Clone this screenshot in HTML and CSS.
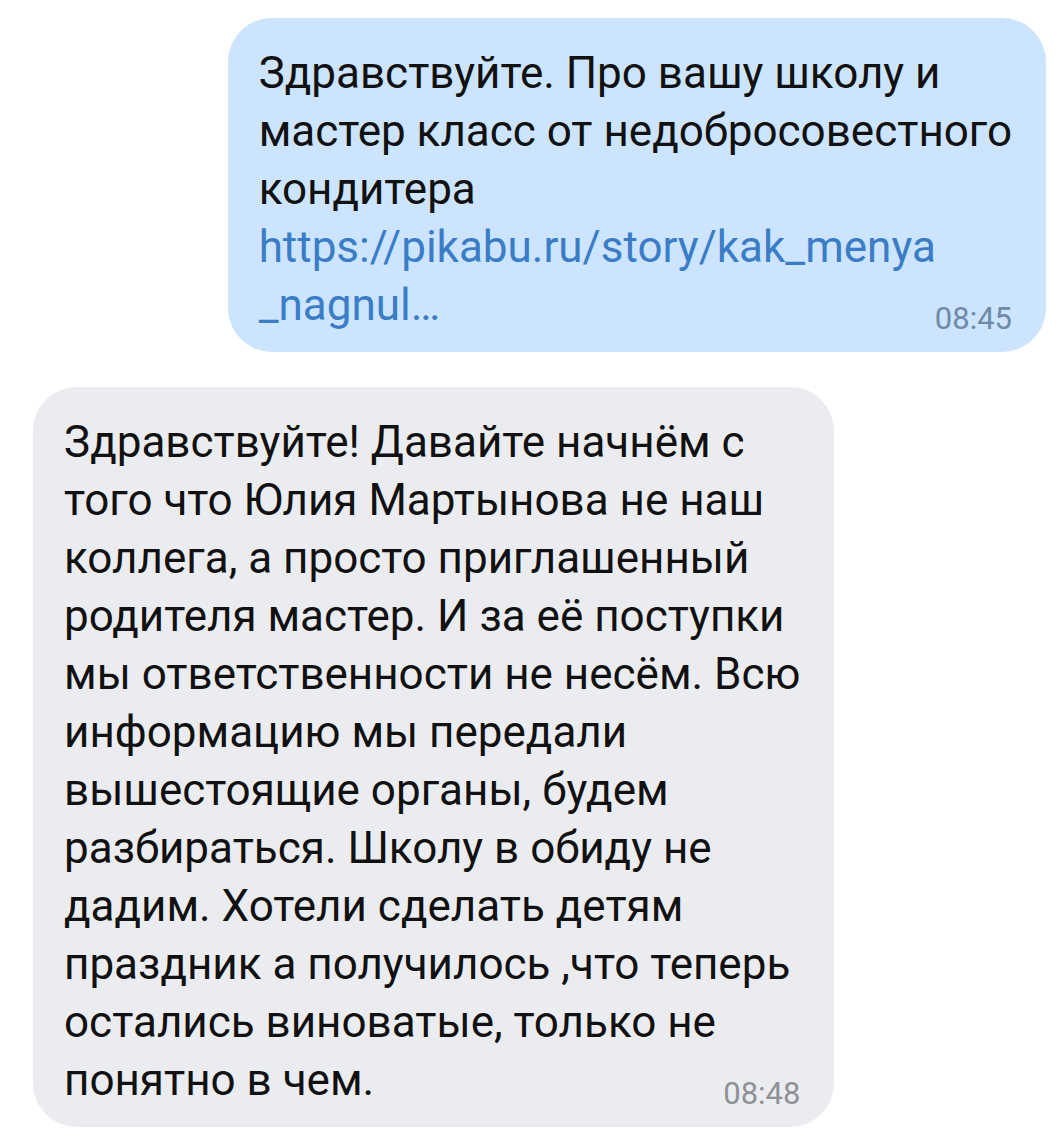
FILE: index.html
```html
<!DOCTYPE html>
<html lang="ru">
<head>
    <meta charset="UTF-8">
    <meta name="viewport" content="width=device-width, initial-scale=1.0">
    <title>Сообщения</title>
    <link rel="stylesheet" href="styles.css">
</head>
<body>
    <div class="chat">
        <!-- outgoing -->
        <div class="msg msg-out">
            <div class="text">
                Здравствуйте. Про вашу школу и<br>
                мастер класс от недобросовестного<br>
                кондитера<br>
                <a class="link" href="#">https://pikabu.ru/story/kak_menya<br>_nagnul…</a>
            </div>
            <div class="time">08:45</div>
        </div>

        <!-- incoming -->
        <div class="msg msg-in">
            <div class="text">
                Здравствуйте! Давайте начнём с<br>
                того что Юлия Мартынова не наш<br>
                коллега, а просто приглашенный<br>
                родителя мастер. И за её поступки<br>
                мы ответственности не несём. Всю<br>
                информацию мы передали<br>
                вышестоящие органы, будем<br>
                разбираться. Школу в обиду не<br>
                дадим. Хотели сделать детям<br>
                праздник а получилось ,что теперь<br>
                остались виноватые, только не<br>
                понятно в чем.
            </div>
            <div class="time">08:48</div>
        </div>
    </div>
</body>
</html>
```

FILE: styles.css
```css
body {
    margin: 0;
    background: #fff;
    font-family: Roboto, "Noto Sans", sans-serif;
    color: #111;
}

.chat {
    display: flex;
    flex-direction: column;
    gap: 35px;
    padding: 18px 17px 20px 33px;
}

/* Message bubbles */
.msg {
    display: flex;
    flex-direction: column;
    width: fit-content;
    padding: 26px 34px 14px 31px;
    border-radius: 44px;
}

.msg-out {
    align-self: flex-end;
    background-color: #cce4fd;
}

.msg-in {
    align-self: flex-start;
    background-color: #ebecf0;
}

.text {
    font-size: 44px;
    line-height: 58px;
    white-space: nowrap;
}

.link {
    color: #3a7dc6;
    text-decoration: none;
}

/* Timestamp sits on the last line's row */
.time {
    align-self: flex-end;
    margin-top: -34px;
    font-size: 31px;
    line-height: 38px;
}

.msg-out .time {
    color: #6f8aa8;
}

.msg-in .time {
    color: #8e9196;
}
```
